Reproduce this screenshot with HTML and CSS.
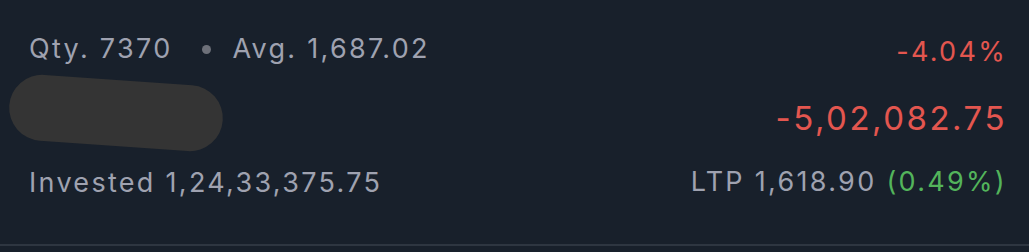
FILE: index.html
```html
<!DOCTYPE html>
<html lang="en">
<head>
  <meta charset="UTF-8" />
  <meta name="viewport" content="width=device-width, initial-scale=1.0"/>
  <title>Position</title>
  <link rel="stylesheet" href="styles.css">
</head>
<body>
  <div class="position">
    <div class="col col-left">
      <div class="meta">
        <span>Qty. 7370</span>
        <span class="dot"></span>
        <span>Avg. 1,687.02</span>
      </div>
      <div class="redact"></div>
      <div class="invested">Invested 1,24,33,375.75</div>
    </div>
    <div class="col col-right">
      <div class="pct loss">-4.04%</div>
      <div class="pnl loss">-5,02,082.75</div>
      <div class="ltp">LTP 1,618.90 <span class="gain">(0.49%)</span></div>
    </div>
  </div>
</body>
</html>
```

FILE: styles.css
```css
body {
  margin: 0; padding: 0;
  font-family: Inter, 'Noto Sans', sans-serif;
  background: #18202b;
  color: #9fa2b0;
  height: 252px;
  overflow: hidden;
}
.position {
  display: flex;
  justify-content: space-between;
  padding: 0 22px 0 29px;
  height: 244px;
  border-bottom: 2px solid #2e3641;
}
.col {
  display: flex;
  flex-direction: column;
  font-size: 27px;
  line-height: 32px;
  letter-spacing: 2.3px;
}
.col-left {
  padding-top: 33px;
}
.col-right {
  padding-top: 36px;
  align-items: flex-end;
}
.meta {
  display: flex;
  align-items: center;
}
.dot {
  width: 9px;
  height: 9px;
  border-radius: 50%;
  background: #6d7079;
  margin: 0 21px 0 30px;
}
.redact {
  width: 214px;
  height: 66px;
  border-radius: 33px;
  background: #343434;
  margin: 15px 0 0 -20px;
  transform: rotate(4deg);
}
.invested {
  margin-top: 21px;
}
.pnl {
  font-size: 33px;
  line-height: 40px;
  letter-spacing: 2.5px;
  margin-top: 30px;
}
.ltp {
  margin-top: 28px;
}
.loss {
  color: #e3564f;
}
.gain {
  color: #53b45b;
}
```
